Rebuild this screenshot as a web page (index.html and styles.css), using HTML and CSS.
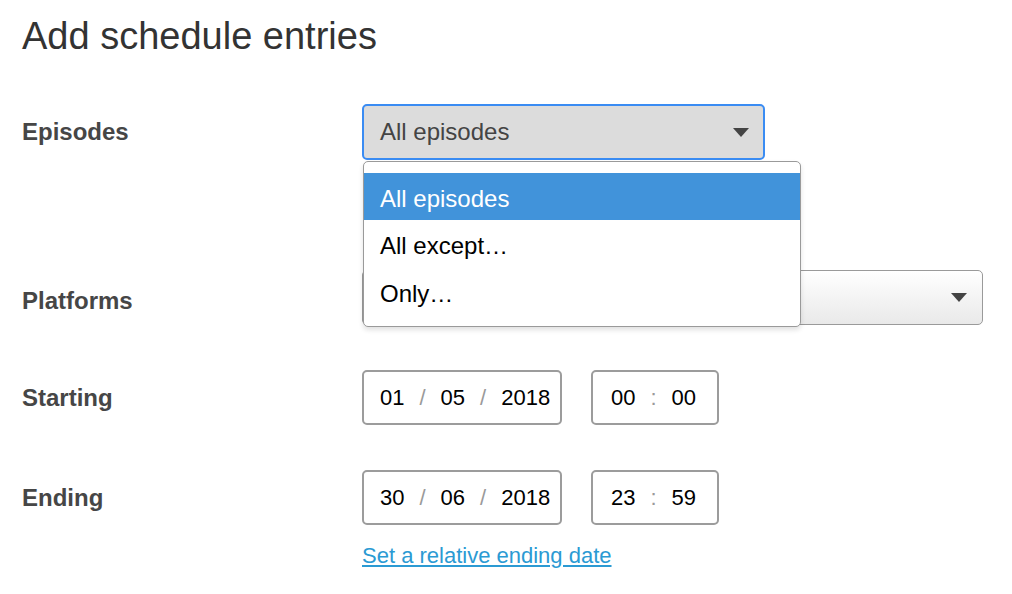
FILE: index.html
```html
<!DOCTYPE html>
<html lang="en">
<head>
<meta charset="utf-8">
<title>Add schedule entries</title>
<link rel="stylesheet" href="styles.css">
</head>
<body>
<main class="page">
  <h1 class="title">Add schedule entries</h1>
  <div class="form">
    <div class="row row-episodes">
      <label class="label">Episodes</label>
      <div class="control">
        <div class="select select-focused select-episodes">
          <span class="select-value">All episodes</span>
          <svg class="caret" width="16" height="9" viewBox="0 0 16 9"><path d="M0 0H16L8 9Z" fill="#444"/></svg>
        </div>
        <ul class="menu">
          <li class="menu-item menu-item-active">All episodes</li>
          <li class="menu-item">All except…</li>
          <li class="menu-item">Only…</li>
        </ul>
      </div>
    </div>
    <div class="row">
      <label class="label label-low">Platforms</label>
      <div class="control">
        <div class="select select-platforms">
          <span class="select-value"></span>
          <svg class="caret" width="16" height="9" viewBox="0 0 16 9"><path d="M0 0H16L8 9Z" fill="#444"/></svg>
        </div>
      </div>
    </div>
    <div class="row">
      <label class="label">Starting</label>
      <div class="control inline">
        <div class="field field-date">
          <span class="seg">01</span><span class="sep">/</span><span class="seg">05</span><span class="sep">/</span><span class="seg">2018</span>
        </div>
        <div class="field field-time">
          <span class="seg">00</span><span class="sep">:</span><span class="seg">00</span>
        </div>
      </div>
    </div>
    <div class="row row-last">
      <label class="label">Ending</label>
      <div class="control">
        <div class="inline">
          <div class="field field-date">
            <span class="seg">30</span><span class="sep">/</span><span class="seg">06</span><span class="sep">/</span><span class="seg">2018</span>
          </div>
          <div class="field field-time">
            <span class="seg">23</span><span class="sep">:</span><span class="seg">59</span>
          </div>
        </div>
        <a class="link" href="#">Set a relative ending date</a>
      </div>
    </div>
  </div>
</main>
</body>
</html>
```

FILE: styles.css
```css
* { box-sizing: border-box; }

html, body {
  margin: 0;
  padding: 0;
  background: #fff;
}

body {
  font-family: "Liberation Sans", Arial, Helvetica, sans-serif;
  color: #333;
}

.page {
  padding: 14px 0 0 22px;
}

.title {
  margin: 0;
  font-size: 38px;
  line-height: 44px;
  font-weight: normal;
  color: #333;
}

.form {
  margin-top: 46px;
}

.row {
  display: flex;
  align-items: flex-start;
  margin-bottom: 45px;
}

.row-episodes {
  margin-bottom: 110px;
}

.row-last {
  margin-bottom: 0;
}

.label {
  width: 340px;
  flex: none;
  font-size: 24px;
  font-weight: bold;
  color: #464646;
  height: 55px;
  display: flex;
  align-items: center;
}

.label-low {
  padding-top: 6px;
}

.control {
  position: relative;
}

.inline {
  display: flex;
  gap: 29px;
}

.select {
  height: 56px;
  border: 1px solid #9a9a9a;
  border-radius: 5px;
  display: flex;
  align-items: center;
  justify-content: space-between;
  padding: 0 14px 0 17px;
}

.select-focused {
  border: 2px solid #3a8cf3;
  background: #dcdcdc;
  padding-left: 16px;
}

.select-episodes {
  width: 403px;
}

.select-platforms {
  width: 621px;
  height: 55px;
  border: 1.5px solid #9a9a9a;
  background: linear-gradient(#ffffff, #e9e9e9);
  padding-right: 15px;
}

.select-value {
  font-size: 24px;
  color: #444;
}

.caret {
  display: block;
  flex: none;
}

.menu {
  position: absolute;
  top: 57px;
  left: 1px;
  width: 438px;
  height: 166px;
  margin: 0;
  padding: 11px 0 0;
  list-style: none;
  background: #fff;
  border: 1.5px solid #9a9a9a;
  border-radius: 5px;
  box-shadow: 0 3px 5px rgba(0, 0, 0, 0.12);
  z-index: 2;
}

.menu-item {
  height: 48px;
  line-height: 52px;
  padding-left: 16px;
  font-size: 24px;
  color: #000;
}

.menu-item-active {
  background: #4193da;
  color: #fff;
  height: 47px;
  line-height: 51px;
}

.field {
  height: 55px;
  border: 2px solid #9c9c9c;
  border-radius: 5px;
  display: flex;
  align-items: center;
  font-size: 22px;
  color: #000;
}

.field-date {
  width: 200px;
  padding-left: 16px;
  gap: 15px;
}

.field-time {
  width: 128px;
  padding-left: 18px;
  gap: 15px;
}

.sep {
  color: #9a9a9a;
}

.link {
  display: inline-block;
  margin-top: 18px;
  font-size: 22px;
  line-height: 26px;
  color: #2b9ad3;
  text-decoration: underline;
  text-underline-offset: 2px;
}
```
